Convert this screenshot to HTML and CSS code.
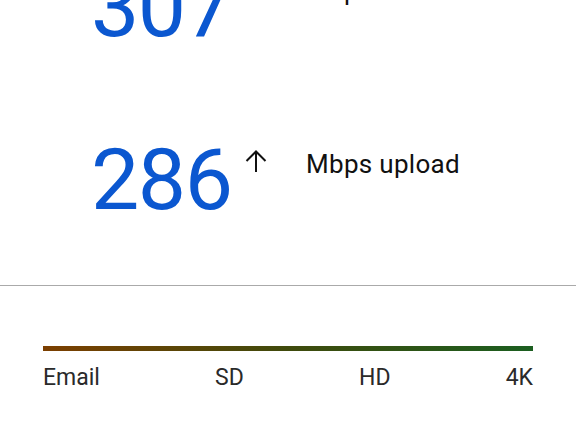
FILE: index.html
```html
<html>
<head>
  <meta http-equiv="Content-Type" content="text/html; charset=utf8">
  <title>Speed test</title>
  <link rel="stylesheet" href="styles.css">
</head>
<body>
  <div class="speeds">
    <div class="speed_row">
      <div class="speed_value">307</div>
      <svg class="speed_arrow" width="22" height="23" viewBox="0 0 22 23">
        <path d="M11 22V1.5M1.5 11L11 1.5L20.5 11" fill="none" stroke="#111" stroke-width="2"/>
      </svg>
      <div class="speed_label">Mbps download</div>
    </div>
    <div class="speed_row">
      <div class="speed_value">286</div>
      <svg class="speed_arrow" width="22" height="23" viewBox="0 0 22 23">
        <path d="M11 22V1.5M1.5 11L11 1.5L20.5 11" fill="none" stroke="#111" stroke-width="2"/>
      </svg>
      <div class="speed_label">Mbps upload</div>
    </div>
  </div>
  <div class="divider"></div>
  <div class="quality">
    <div class="quality_bar"></div>
    <div class="quality_labels">
      <span>Email</span>
      <span>SD</span>
      <span>HD</span>
      <span>4K</span>
    </div>
  </div>
</body>
</html>
```

FILE: styles.css
```css
body {
  margin: 0;
  background-color: #ffffff;
  font-family: Roboto, "Liberation Sans", sans-serif;
  overflow: hidden;
}
.speeds {
  display: flex;
  flex-direction: column;
  gap: 25px;
  margin-top: -36px;
}
.speed_row {
  display: flex;
  align-items: flex-start;
  height: 148px;
  padding-left: 91px;
}
.speed_value {
  width: 154px;
  color: #0b57d0;
  font-size: 86px;
  line-height: 1;
  letter-spacing: -1.5px;
}
.speed_arrow {
  margin-top: 13px;
}
.speed_label {
  margin-left: 39px;
  margin-top: 14px;
  color: #111111;
  font-size: 26px;
  line-height: 1;
  letter-spacing: 0.3px;
}
.divider {
  height: 1px;
  background-color: #aaaaaa;
}
.quality {
  padding: 60px 43px 0 43px;
}
.quality_bar {
  height: 5px;
  background: linear-gradient(to right, #7c3f00, #3f4a0c 50%, #1b5e20);
}
.quality_labels {
  display: flex;
  justify-content: space-between;
  margin-top: 15px;
  color: #2a2a2a;
  font-size: 23px;
  line-height: 1;
}
```
